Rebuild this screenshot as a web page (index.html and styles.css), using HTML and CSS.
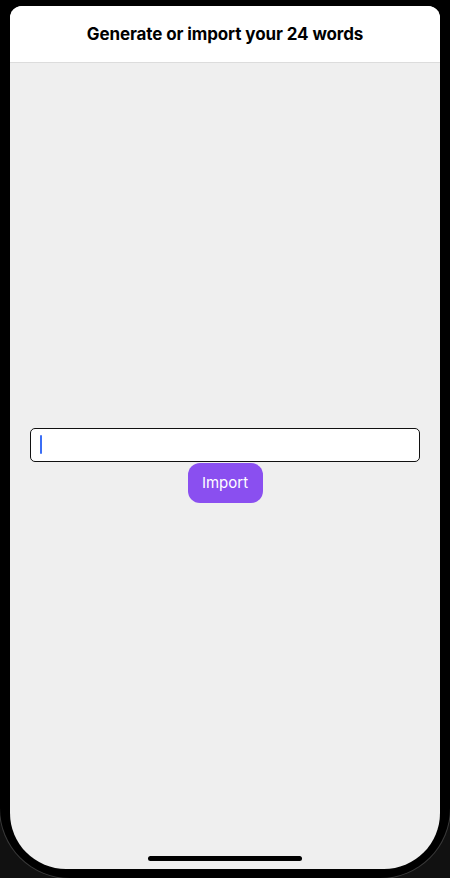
FILE: index.html
```html
<!DOCTYPE html>
<html lang="en">
<head>
  <meta charset="UTF-8">
  <meta name="viewport" content="width=device-width, initial-scale=1">
  <title>Import words</title>
  <link rel="stylesheet" href="styles.css">
</head>
<body>
  <div class="phone">
    <div class="screen">
      <header class="top-bar">
        <h1>Generate or import your 24 words</h1>
      </header>
      <main class="content">
        <div class="field">
          <span class="caret"></span>
        </div>
        <button class="import-btn">Import</button>
      </main>
      <div class="home-bar"></div>
    </div>
  </div>
</body>
</html>
```

FILE: styles.css
```css
*{
  padding: 0;
  margin: 0;
  box-sizing: border-box;
}
body{
  background: #111;
  width: 450px;
  height: 878px;
  overflow: hidden;
  font-family: Inter, 'Noto Sans', sans-serif;
}
/* phone body, rounded bottom edge shows a little bezel rim */
.phone{
  position: relative;
  height: 100%;
  padding: 6px 10px 9px;
  background: #000;
  border-radius: 0 0 70px 70px;
  box-shadow: 0 0 0 1px #3a3a3a;
}
.screen{
  position: relative;
  height: 100%;
  display: flex;
  flex-direction: column;
  background: #efefef;
  border-radius: 12px 12px 56px 56px;
  overflow: hidden;
}
.top-bar{
  height: 57px;
  background: #fff;
  border-bottom: 1px solid #dcdcdc;
  display: flex;
  align-items: center;
  justify-content: center;
}
.top-bar h1{
  font-size: 17px;
  font-weight: 700;
  color: #000;
  letter-spacing: -0.1px;
}
.content{
  flex: 1;
  display: flex;
  flex-direction: column;
  align-items: center;
  justify-content: center;
  padding: 0 20px 2px;
}
.field{
  width: 100%;
  height: 34px;
  background: #fff;
  border: 1.5px solid #111;
  border-radius: 5px;
  display: flex;
  align-items: center;
  padding-left: 9px;
}
.caret{
  width: 2px;
  height: 19px;
  background: #3b6ef5;
  border-radius: 1px;
}
.import-btn{
  margin-top: 1px;
  width: 75px;
  height: 40px;
  border: none;
  border-radius: 12px;
  background: #8a4ff0;
  color: #fff;
  font-family: Inter, 'Noto Sans', sans-serif;
  font-size: 15px;
  font-weight: 400;
}
.home-bar{
  position: absolute;
  left: 138px;
  bottom: 8px;
  width: 154px;
  height: 5px;
  border-radius: 3px;
  background: #000;
}
```
